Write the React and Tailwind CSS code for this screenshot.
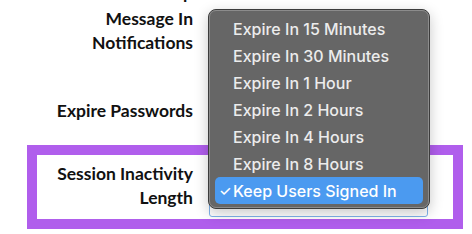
const items = [
  'Expire In 15 Minutes',
  'Expire In 30 Minutes',
  'Expire In 1 Hour',
  'Expire In 2 Hours',
  'Expire In 4 Hours',
  'Expire In 8 Hours',
  'Keep Users Signed In',
];

const labelCls =
  "w-[156px] shrink-0 text-right font-['Lato',sans-serif] font-bold text-[17.5px] leading-[24px] text-[#111]";

export default function App() {
  return (
    <div className="relative w-[472px] h-[234px] overflow-hidden bg-white">
      {/* settings rows */}
      <div className="flex flex-col">
        <div className="ml-[27px] mt-[-27px] flex gap-[16px] border-[10px] border-transparent">
          <div className={labelCls}>
            <span className="relative top-[-2px]">Show Group</span>
            <br />
            Message In
            <br />
            Notifications
          </div>
          <div className="w-[219px]" />
        </div>
        <div className="ml-[27px] mt-[24px] flex gap-[16px] border-[10px] border-transparent">
          <div className={labelCls}>Expire Passwords</div>
          <div className="w-[219px]" />
        </div>
        <div className="ml-[27px] mt-[12px] w-[436px] h-[84px] flex gap-[16px] border-[10px] border-[#b05eec]">
          <div className={`${labelCls} pt-[7px]`}>
            Session Inactivity
            <br />
            Length
          </div>
          <div className="flex flex-col justify-end">
            <div className="w-[219px] h-[30px] mb-[2px] rounded-[3px] border border-[#7fb3ea] bg-white" />
          </div>
        </div>
      </div>

      {/* open dropdown menu */}
      <div className="absolute left-[208px] top-[9px] w-[222px] h-[200px] rounded-[8px] border border-[#3c3c3c] bg-[#666666] shadow-[0_4px_14px_rgba(0,0,0,0.22)]">
        <div className="h-full rounded-[7px] border border-[#8c8c8c] px-[5px] pt-[4px] font-['Inter',sans-serif] text-[16px] font-medium">
          {items.map((t, i) => {
            const sel = i === items.length - 1;
            return (
              <div
                key={t}
                className={
                  sel
                    ? 'relative h-[27px] flex items-center rounded-[5px] bg-[#4b9af0] pl-[18px] text-white'
                    : 'relative h-[27px] flex items-center pl-[18px] text-[#ececec]'
                }
              >
                {sel && <span className="absolute left-[4px] text-[14px]">✓</span>}
                {t}
              </div>
            );
          })}
        </div>
      </div>
    </div>
  );
}
